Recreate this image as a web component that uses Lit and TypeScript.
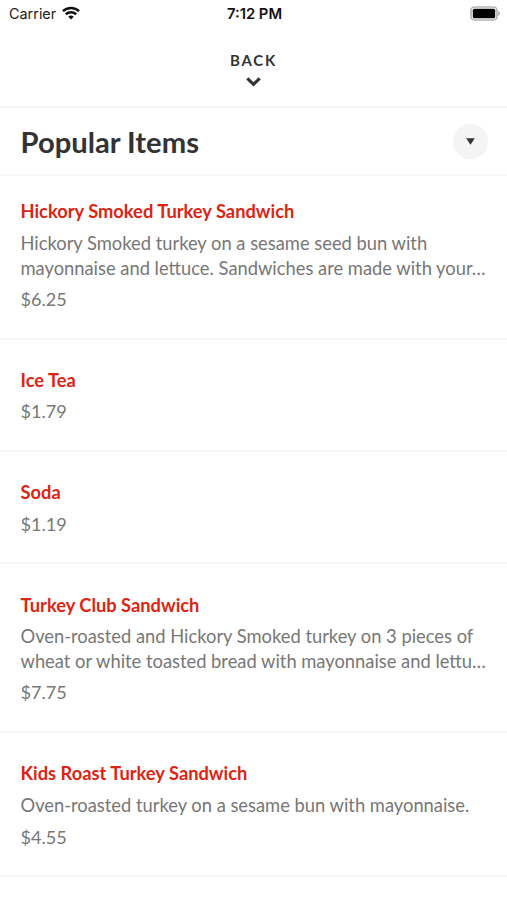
import { LitElement, html, css } from "lit";
import { customElement } from "lit/decorators.js";

interface Item { name: string; lines: string[]; price: string; }

const items: Item[] = [
  { name: "Hickory Smoked Turkey Sandwich", lines: ["Hickory Smoked turkey on a sesame seed bun with", "mayonnaise and lettuce. Sandwiches are made with your…"], price: "$6.25" },
  { name: "Ice Tea", lines: [], price: "$1.79" },
  { name: "Soda", lines: [], price: "$1.19" },
  { name: "Turkey Club Sandwich", lines: ["Oven-roasted and Hickory Smoked turkey on 3 pieces of", "wheat or white toasted bread with mayonnaise and lettu…"], price: "$7.75" },
  { name: "Kids Roast Turkey Sandwich", lines: ["Oven-roasted turkey on a sesame bun with mayonnaise."], price: "$4.55" },
];

@customElement("app-root")
export class AppRoot extends LitElement {
  static styles = css`
    :host { display: block; height: 900px; overflow: hidden; background: #fff; font-family: Lato, sans-serif; color: #333; }
    * { box-sizing: border-box; }
    .status { height: 28px; display: grid; grid-template-columns: 1fr auto 1fr; align-items: center; padding: 0 7px 0 9px; font: 14.4px/28px Inter, sans-serif; color: #222; }
    .carrier { display: flex; align-items: center; gap: 6px; }
    .carrier svg { margin-top: -2px; }
    .time { font-weight: 600; font-size: 14.8px; color: #111; }
    .battery { justify-self: end; display: block; margin-top: -2px; }
    .back { height: 80px; padding: 22px 0 0 0; display: flex; flex-direction: column; align-items: center; border-bottom: 2px solid #f6f6f6; font-weight: 700; font-size: 15px; line-height: 20px; letter-spacing: 1.8px; }
    .back svg { margin: 7px 1px 0 0; }
    .head { height: 68px; display: flex; align-items: center; justify-content: space-between; padding: 0 19px 0 20.5px; border-bottom: 2px solid #f7f7f7; }
    h1 { margin: 2px 0 0; font-size: 29.2px; line-height: 36px; font-weight: 700; }
    .toggle { width: 35px; height: 35px; border-radius: 50%; background: #f4f4f4; display: grid; place-items: center; }
    .item { padding: 28.4px 0 26px 20.5px; border-bottom: 2px solid #f7f7f7; white-space: nowrap; font-size: 18.34px; line-height: 24.5px; color: #777; }
    .head + .item { padding-top: 23.4px; }
    .name { font-weight: 700; font-size: 18.3px; color: #dc2412; }
    .desc { margin-top: 7.2px; }
    .price { margin-top: 7px; font-size: 18.1px; }
  `;

  render() {
    return html`
      <div class="status">
        <div class="carrier"><span>Carrier</span>
          <svg width="18" height="14" viewBox="0 0 19 14" fill="none" stroke="#111" stroke-width="2.6"><path d="M1 5.1a12.2 12.2 0 0 1 17 0M4 8.3a8 8 0 0 1 11 0" /><path d="M6.6 10.9a4.2 4.2 0 0 1 5.8 0L9.5 13.8z" fill="#111" stroke="none" /></svg>
        </div>
        <span class="time">7:12 PM</span>
        <svg class="battery" width="30" height="15" viewBox="0 0 30 15"><rect x="1" y="1" width="26" height="13" rx="3.5" fill="none" stroke="#b5b5b5" stroke-width="1.7" /><rect x="2.8" y="2.8" width="22.4" height="9.4" rx="1.5" /><path d="M28.3 5v5q1.7-.7 1.7-2.5T28.3 5" fill="#aaa" /></svg>
      </div>
      <div class="back"><span>BACK</span><svg width="15" height="10" viewBox="0 0 15 10" fill="none" stroke="#333" stroke-width="3"><path d="M1.3 1.3l6.2 6 6.2-6" /></svg></div>
      <div class="head"><h1>Popular Items</h1><div class="toggle"><svg width="9" height="7" viewBox="0 0 9 7"><path d="M.2.3h8.6L4.5 6.8z" fill="#333" /></svg></div></div>
      ${items.map((i) => html`<div class="item">
        <div class="name">${i.name}</div>
        ${i.lines.length ? html`<div class="desc">${i.lines.map((l) => html`<div>${l}</div>`)}</div>` : null}
        <div class="price">${i.price}</div>
      </div>`)}
    `;
  }
}
